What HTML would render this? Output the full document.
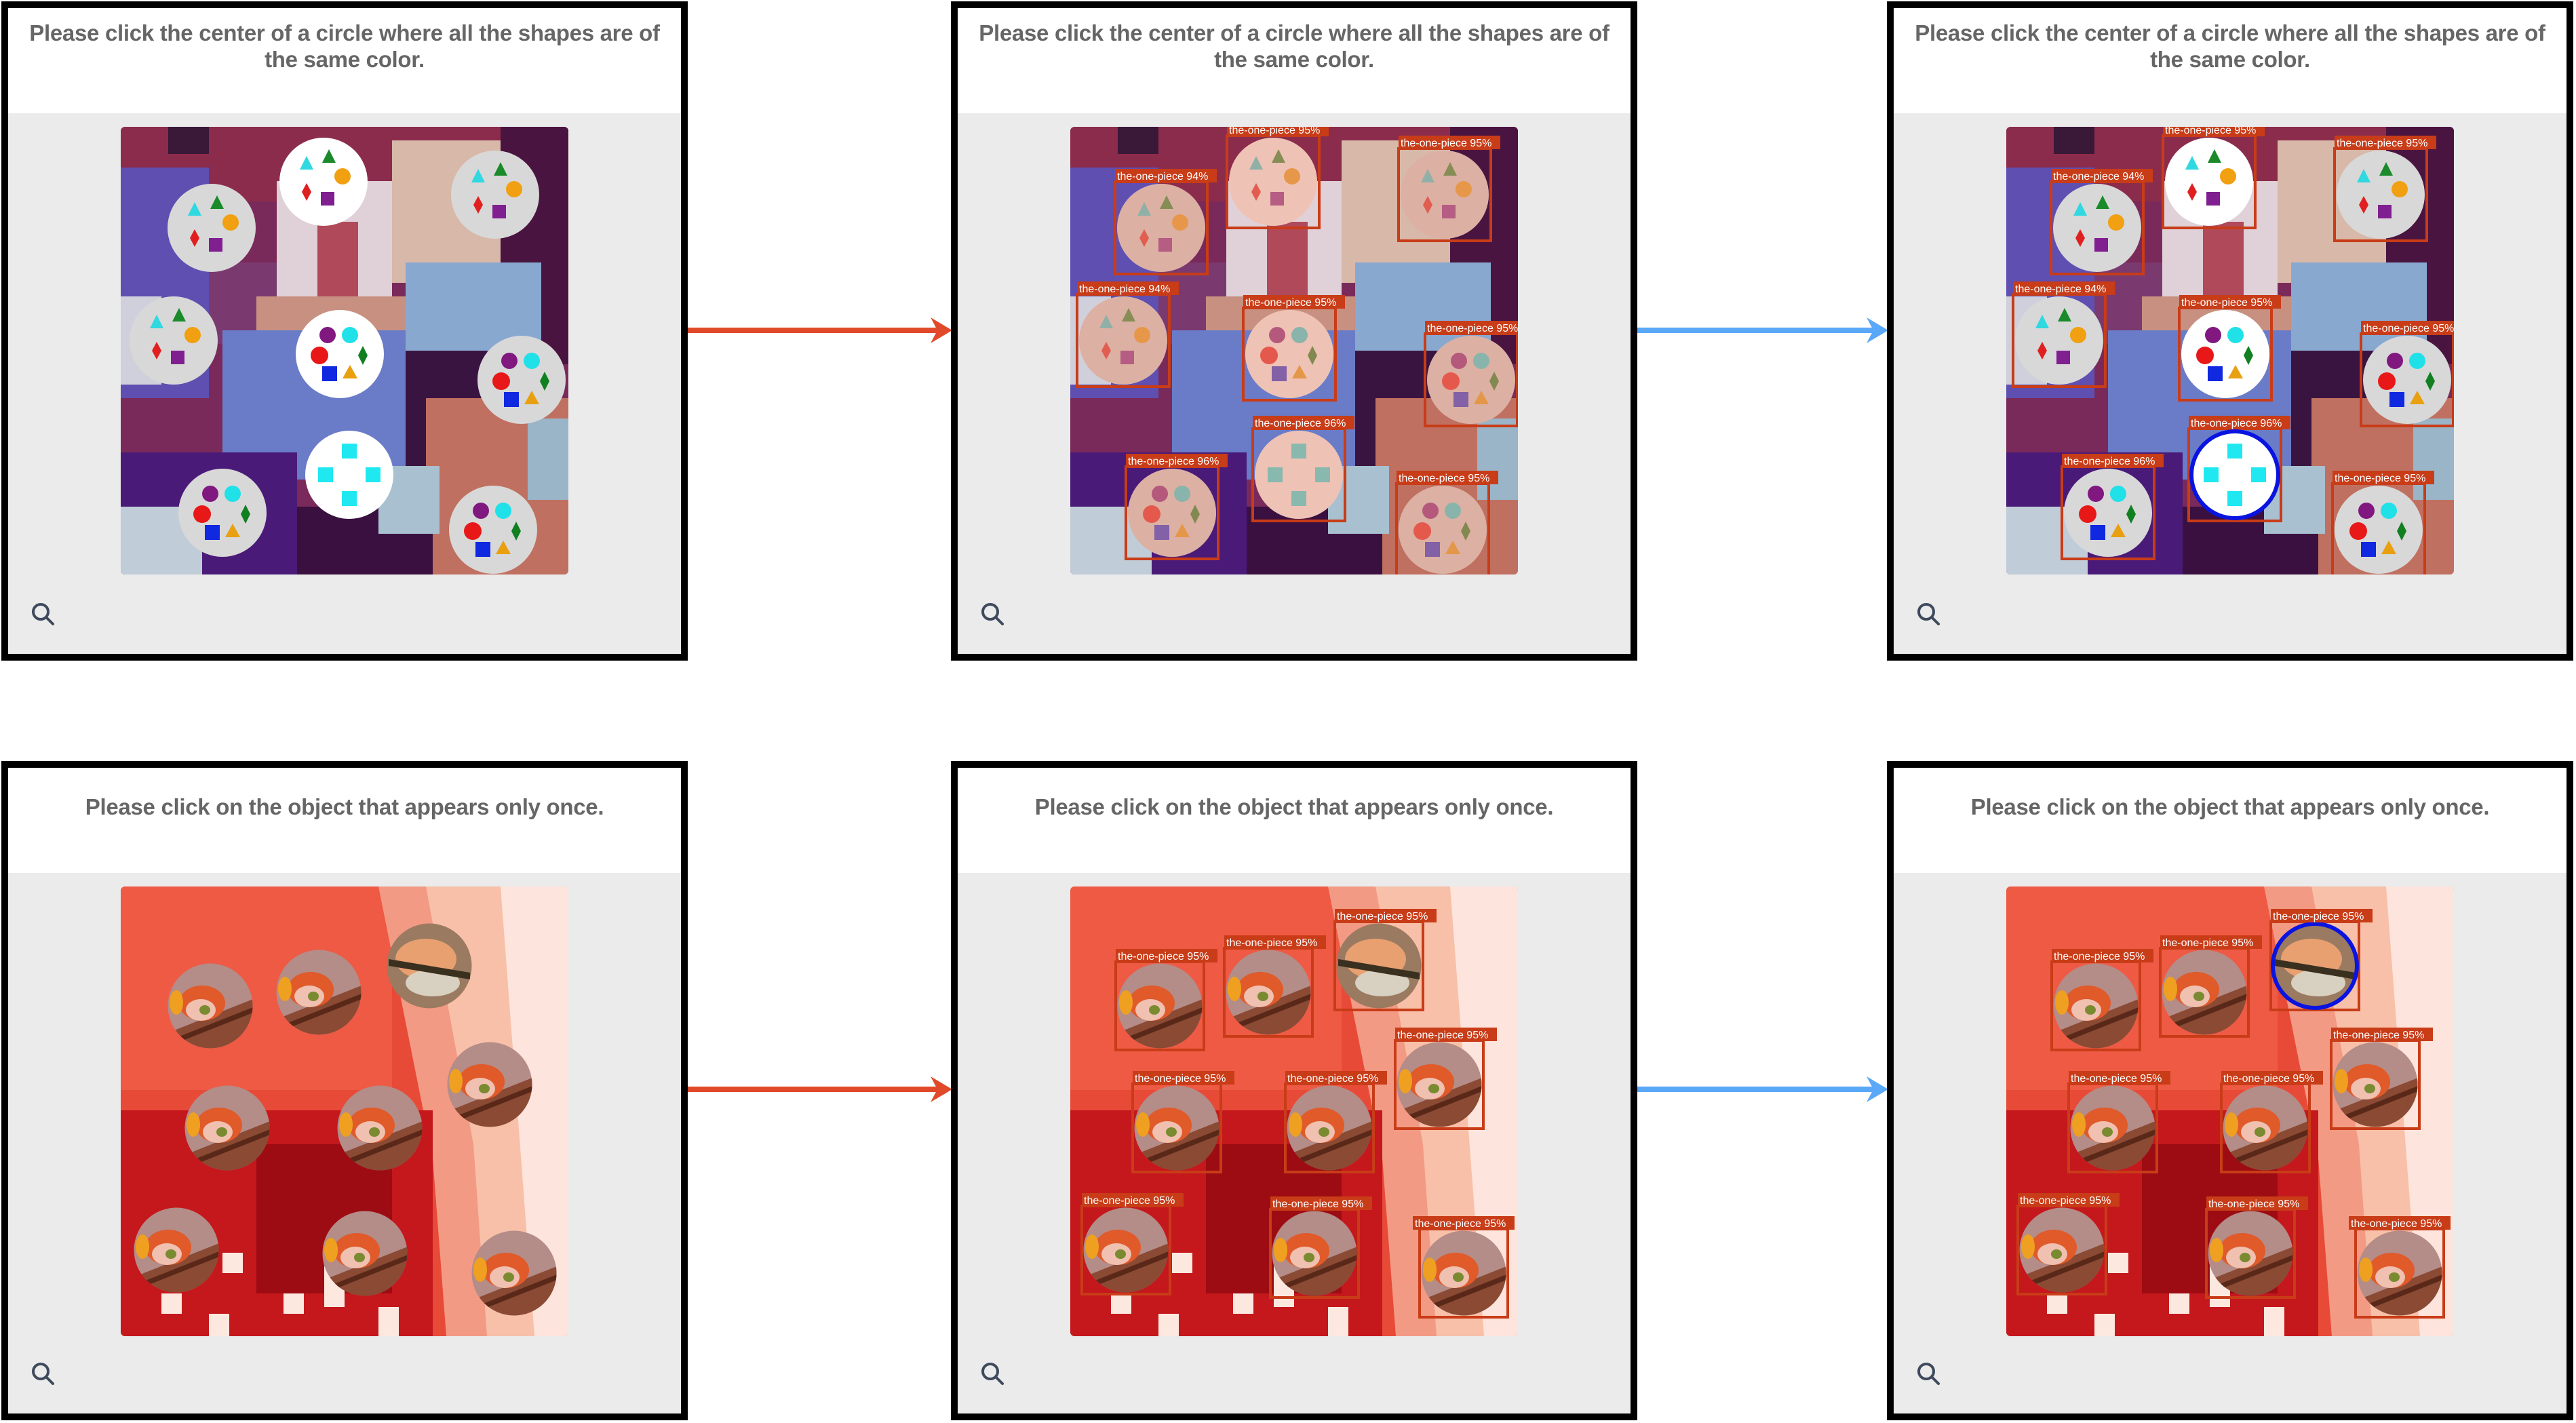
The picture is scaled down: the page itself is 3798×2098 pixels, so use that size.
<!DOCTYPE html>
<html><head><meta charset="utf-8"><style>
*{margin:0;padding:0;box-sizing:border-box}
body{width:3798px;height:2098px;background:#fff;position:relative;overflow:hidden;font-family:"Liberation Sans",sans-serif}
.p{position:absolute;width:1012px;height:972px;border:10px solid #000;background:#ebebeb}
.h{position:absolute;left:0;top:0;right:0;height:155px;background:#fff;color:#666;font-weight:bold;font-size:33px;text-align:center;line-height:39px;padding-top:17px;white-space:nowrap;letter-spacing:-0.3px}
.h1{padding-top:38px}
.im{position:absolute;left:166px;top:175px;border-radius:6px}
.s{position:absolute;left:32px;top:874px}
</style></head><body>
<svg width="0" height="0" style="position:absolute"><defs>
<clipPath id="cr"><rect width="660" height="660" rx="6"/></clipPath>
<clipPath id="cr2"><rect width="660" height="663" rx="6"/></clipPath>
<clipPath id="sc"><circle r="62.5"/></clipPath>
<g id="bg1">
<rect width="660" height="660" fill="#7a2a5a"/>
<rect width="660" height="110" fill="#8c2c4c"/>
<rect x="70" y="0" width="60" height="40" fill="#3a1838"/>
<rect x="0" y="60" width="130" height="340" fill="#5f4fb0"/>
<rect x="0" y="250" width="60" height="130" fill="#d0d0dc"/>
<rect x="230" y="80" width="170" height="170" fill="#e0d0d8"/>
<rect x="290" y="140" width="60" height="120" fill="#b04a5a"/>
<rect x="400" y="20" width="160" height="210" fill="#d8b8a8"/>
<rect x="560" y="0" width="100" height="350" fill="#4a1440"/>
<rect x="130" y="200" width="100" height="120" fill="#7a3a70"/>
<rect x="200" y="250" width="230" height="80" fill="#c89080"/>
<rect x="420" y="200" width="200" height="130" fill="#88a8d0"/>
<rect x="150" y="300" width="270" height="220" fill="#6a7cc8"/>
<rect x="420" y="330" width="120" height="200" fill="#3a1440"/>
<rect x="450" y="400" width="210" height="260" fill="#c07060"/>
<rect x="0" y="480" width="260" height="180" fill="#4a1a78"/>
<rect x="0" y="560" width="120" height="100" fill="#c0ccd8"/>
<rect x="260" y="560" width="200" height="100" fill="#3a1040"/>
<rect x="380" y="500" width="90" height="100" fill="#a8c0d0"/>
<rect x="600" y="430" width="60" height="120" fill="#9ab4c8"/>
</g>
<g id="bg2">
<rect width="660" height="663" fill="#e84a38"/>
<rect x="0" y="0" width="400" height="300" fill="#ee5a44"/>
<polygon points="380,0 660,0 660,663 480,663 460,400" fill="#f39a84"/>
<polygon points="450,0 660,0 660,663 540,663 520,380" fill="#f8c0a8"/>
<polygon points="560,0 660,0 660,663 610,663" fill="#fde4dc"/>
<rect x="0" y="330" width="460" height="333" fill="#c4181c"/>
<rect x="200" y="380" width="200" height="220" fill="#9c0c12"/>
<rect x="150" y="540" width="30" height="30" fill="#fde8e0"/><rect x="240" y="600" width="30" height="30" fill="#fde8e0"/><rect x="300" y="560" width="30" height="60" fill="#fde8e0"/><rect x="60" y="600" width="30" height="30" fill="#fde8e0"/><rect x="380" y="620" width="30" height="43" fill="#fde8e0"/><rect x="130" y="630" width="30" height="33" fill="#fde8e0"/>
</g>
<g id="A"><polygon points="-25,-38 -15,-18 -35,-18" fill="#30d8e0"/><polygon points="8,-48 18,-28 -2,-28" fill="#1a8a2a"/><circle cx="28" cy="-8" r="12" fill="#f0a010"/><polygon points="-25,2 -18,15 -25,28 -32,15" fill="#e02020"/><rect x="-4" y="15" width="20" height="20" fill="#802090"/></g>
<g id="B"><circle cx="-18" cy="-28" r="12" fill="#801880"/><circle cx="15" cy="-28" r="12" fill="#20e0e8"/><circle cx="-30" cy="2" r="13" fill="#e81818"/><polygon points="34,-12 41,2 34,16 27,2" fill="#108020"/><rect x="-26" y="18" width="22" height="22" fill="#1028e0"/><polygon points="15,16 26,36 4,36" fill="#e8a010"/></g>
<g id="C"><rect x="-11" y="-46" width="22" height="22" fill="#20e8f0"/><rect x="-46" y="-11" width="22" height="22" fill="#20e8f0"/><rect x="24" y="-11" width="22" height="22" fill="#20e8f0"/><rect x="-11" y="24" width="22" height="22" fill="#20e8f0"/></g>
<g id="W"><circle r="65" fill="#fff"/></g>
<g id="G"><circle r="65" fill="#d8d8d8"/></g>
<g id="T"><circle r="65" fill="#e09078" opacity=".55"/></g>
<g id="S"><g clip-path="url(#sc)"><rect x="-63" y="-63" width="126" height="126" fill="#b48c88"/><polygon points="-63,40 63,-10 63,63 -63,63" fill="#8a4a34"/><polygon points="-63,52 63,2 63,10 -63,60" fill="#5a2818"/><ellipse cx="-12" cy="-4" rx="34" ry="26" fill="#e05a2a"/><ellipse cx="-14" cy="6" rx="22" ry="16" fill="#f0c0b0"/><ellipse cx="-8" cy="6" rx="8" ry="7" fill="#7a8a30"/><ellipse cx="-50" cy="-5" rx="10" ry="18" fill="#f0a020"/></g></g>
</defs></svg>

<svg style="position:absolute;left:0;top:0" width="3798" height="2098">
<rect x="1012" y="483" width="376" height="8" fill="#e04a2a"/><polygon points="1404,487 1372,468 1382,487 1372,506" fill="#e04a2a"/>
<rect x="2412" y="483" width="356" height="8" fill="#5aa8f8"/><polygon points="2784,487 2752,468 2762,487 2752,506" fill="#5aa8f8"/>
<rect x="1012" y="1602" width="376" height="8" fill="#e04a2a"/><polygon points="1404,1606 1372,1587 1382,1606 1372,1625" fill="#e04a2a"/>
<rect x="2412" y="1602" width="356" height="8" fill="#5aa8f8"/><polygon points="2784,1606 2752,1587 2762,1606 2752,1625" fill="#5aa8f8"/>
</svg>

<!-- Row 1 -->
<div class="p" style="left:2px;top:2px"><div class="h">Please click the center of a circle where all the shapes are of<br>the same color.</div>
<svg class="im" width="660" height="660"><g clip-path="url(#cr)"><use href="#bg1"/>
<g transform="translate(299,81)"><use href="#W"/><use href="#A"/></g>
<g transform="translate(134,149)"><use href="#G"/><use href="#A"/></g>
<g transform="translate(552,100)"><use href="#G"/><use href="#A"/></g>
<g transform="translate(78,315)"><use href="#G"/><use href="#A"/></g>
<g transform="translate(323,335)"><use href="#W"/><use href="#B"/></g>
<g transform="translate(591,373)"><use href="#G"/><use href="#B"/></g>
<g transform="translate(337,513)"><use href="#W"/><use href="#C"/></g>
<g transform="translate(150,569)"><use href="#G"/><use href="#B"/></g>
<g transform="translate(549,594)"><use href="#G"/><use href="#B"/></g>
</g></svg>
<svg class="s" width="40" height="40"><circle cx="16" cy="16" r="11" fill="none" stroke="#3e4a5c" stroke-width="4"/><line x1="24" y1="24" x2="34" y2="34" stroke="#3e4a5c" stroke-width="4" stroke-linecap="round"/></svg></div>

<div class="p" style="left:1402px;top:2px"><div class="h">Please click the center of a circle where all the shapes are of<br>the same color.</div>
<svg class="im" width="660" height="660" font-family="Liberation Sans" font-size="16" fill="#fff"><g clip-path="url(#cr)"><use href="#bg1"/>
<g transform="translate(299,81)"><use href="#W"/><use href="#A"/><use href="#T"/></g>
<g transform="translate(134,149)"><use href="#G"/><use href="#A"/><use href="#T"/></g>
<g transform="translate(552,100)"><use href="#G"/><use href="#A"/><use href="#T"/></g>
<g transform="translate(78,315)"><use href="#G"/><use href="#A"/><use href="#T"/></g>
<g transform="translate(323,335)"><use href="#W"/><use href="#B"/><use href="#T"/></g>
<g transform="translate(591,373)"><use href="#G"/><use href="#B"/><use href="#T"/></g>
<g transform="translate(337,513)"><use href="#W"/><use href="#C"/><use href="#T"/></g>
<g transform="translate(150,569)"><use href="#G"/><use href="#B"/><use href="#T"/></g>
<g transform="translate(549,594)"><use href="#G"/><use href="#B"/><use href="#T"/></g>
</g>
<g fill="none" stroke="#c83c18" stroke-width="4">
<rect x="231" y="13" width="136" height="136"/><rect x="66" y="81" width="136" height="136"/><rect x="484" y="32" width="136" height="136"/><rect x="10" y="247" width="136" height="136"/><rect x="255" y="267" width="136" height="136"/><rect x="523" y="305" width="136" height="136"/><rect x="269" y="445" width="136" height="136"/><rect x="82" y="501" width="136" height="136"/><rect x="481" y="526" width="136" height="136"/></g>
<g fill="#c83c18"><rect x="231" y="-6" width="150" height="20"/><rect x="66" y="62" width="150" height="20"/><rect x="484" y="13" width="150" height="20"/><rect x="10" y="228" width="150" height="20"/><rect x="255" y="248" width="150" height="20"/><rect x="523" y="286" width="150" height="20"/><rect x="269" y="426" width="150" height="20"/><rect x="82" y="482" width="150" height="20"/><rect x="481" y="507" width="150" height="20"/></g>
<text x="234" y="10">the-one-piece 95%</text><text x="69" y="78">the-one-piece 94%</text><text x="487" y="29">the-one-piece 95%</text><text x="13" y="244">the-one-piece 94%</text><text x="258" y="264">the-one-piece 95%</text><text x="526" y="302">the-one-piece 95%</text><text x="272" y="442">the-one-piece 96%</text><text x="85" y="498">the-one-piece 96%</text><text x="484" y="523">the-one-piece 95%</text>
</svg>
<svg class="s" width="40" height="40"><circle cx="16" cy="16" r="11" fill="none" stroke="#3e4a5c" stroke-width="4"/><line x1="24" y1="24" x2="34" y2="34" stroke="#3e4a5c" stroke-width="4" stroke-linecap="round"/></svg></div>

<div class="p" style="left:2782px;top:2px"><div class="h">Please click the center of a circle where all the shapes are of<br>the same color.</div>
<svg class="im" width="660" height="660" font-family="Liberation Sans" font-size="16" fill="#fff"><g clip-path="url(#cr)"><use href="#bg1"/>
<g transform="translate(299,81)"><use href="#W"/><use href="#A"/></g>
<g transform="translate(134,149)"><use href="#G"/><use href="#A"/></g>
<g transform="translate(552,100)"><use href="#G"/><use href="#A"/></g>
<g transform="translate(78,315)"><use href="#G"/><use href="#A"/></g>
<g transform="translate(323,335)"><use href="#W"/><use href="#B"/></g>
<g transform="translate(591,373)"><use href="#G"/><use href="#B"/></g>
<g transform="translate(337,513)"><use href="#W"/><use href="#C"/></g>
<g transform="translate(150,569)"><use href="#G"/><use href="#B"/></g>
<g transform="translate(549,594)"><use href="#G"/><use href="#B"/></g>
</g>
<g fill="none" stroke="#c83c18" stroke-width="4">
<rect x="231" y="13" width="136" height="136"/><rect x="66" y="81" width="136" height="136"/><rect x="484" y="32" width="136" height="136"/><rect x="10" y="247" width="136" height="136"/><rect x="255" y="267" width="136" height="136"/><rect x="523" y="305" width="136" height="136"/><rect x="269" y="445" width="136" height="136"/><rect x="82" y="501" width="136" height="136"/><rect x="481" y="526" width="136" height="136"/></g>
<circle cx="337" cy="513" r="64" fill="none" stroke="#0a14e0" stroke-width="6"/>
<g fill="#c83c18"><rect x="231" y="-6" width="150" height="20"/><rect x="66" y="62" width="150" height="20"/><rect x="484" y="13" width="150" height="20"/><rect x="10" y="228" width="150" height="20"/><rect x="255" y="248" width="150" height="20"/><rect x="523" y="286" width="150" height="20"/><rect x="269" y="426" width="150" height="20"/><rect x="82" y="482" width="150" height="20"/><rect x="481" y="507" width="150" height="20"/></g>
<text x="234" y="10">the-one-piece 95%</text><text x="69" y="78">the-one-piece 94%</text><text x="487" y="29">the-one-piece 95%</text><text x="13" y="244">the-one-piece 94%</text><text x="258" y="264">the-one-piece 95%</text><text x="526" y="302">the-one-piece 95%</text><text x="272" y="442">the-one-piece 96%</text><text x="85" y="498">the-one-piece 96%</text><text x="484" y="523">the-one-piece 95%</text>
</svg>
<svg class="s" width="40" height="40"><circle cx="16" cy="16" r="11" fill="none" stroke="#3e4a5c" stroke-width="4"/><line x1="24" y1="24" x2="34" y2="34" stroke="#3e4a5c" stroke-width="4" stroke-linecap="round"/></svg></div>

<!-- Row 2 -->
<div class="p" style="left:2px;top:1122px"><div class="h h1">Please click on the object that appears only once.</div>
<svg class="im" width="660" height="663"><g clip-path="url(#cr2)"><use href="#bg2"/>
<use href="#S" x="132" y="176"/><use href="#S" x="292" y="156"/>
<g transform="translate(455,117)"><circle r="62.5" fill="#9a7a60"/><ellipse cx="-5" cy="-10" rx="45" ry="30" fill="#e8a070"/><ellipse cx="5" cy="25" rx="40" ry="20" fill="#d8d0c0"/><polygon points="-60,-10 60,10 60,20 -60,0" fill="#3a3020"/></g>
<use href="#S" x="544" y="292"/><use href="#S" x="157" y="356"/><use href="#S" x="382" y="356"/><use href="#S" x="82" y="536"/><use href="#S" x="360" y="541"/><use href="#S" x="580" y="570"/>
</g></svg>
<svg class="s" width="40" height="40"><circle cx="16" cy="16" r="11" fill="none" stroke="#3e4a5c" stroke-width="4"/><line x1="24" y1="24" x2="34" y2="34" stroke="#3e4a5c" stroke-width="4" stroke-linecap="round"/></svg></div>

<div class="p" style="left:1402px;top:1122px"><div class="h h1">Please click on the object that appears only once.</div>
<svg class="im" width="660" height="663" font-family="Liberation Sans" font-size="16" fill="#fff"><g clip-path="url(#cr2)"><use href="#bg2"/>
<use href="#S" x="132" y="176"/><use href="#S" x="292" y="156"/>
<g transform="translate(455,117)"><circle r="62.5" fill="#9a7a60"/><ellipse cx="-5" cy="-10" rx="45" ry="30" fill="#e8a070"/><ellipse cx="5" cy="25" rx="40" ry="20" fill="#d8d0c0"/><polygon points="-60,-10 60,10 60,20 -60,0" fill="#3a3020"/></g>
<use href="#S" x="544" y="292"/><use href="#S" x="157" y="356"/><use href="#S" x="382" y="356"/><use href="#S" x="82" y="536"/><use href="#S" x="360" y="541"/><use href="#S" x="580" y="570"/>
</g>
<g fill="none" stroke="#c83c18" stroke-width="4">
<rect x="67" y="111" width="130" height="130"/><rect x="227" y="91" width="130" height="130"/><rect x="390" y="52" width="130" height="130"/><rect x="479" y="227" width="130" height="130"/><rect x="92" y="291" width="130" height="130"/><rect x="317" y="291" width="130" height="130"/><rect x="17" y="471" width="130" height="130"/><rect x="295" y="476" width="130" height="130"/><rect x="515" y="505" width="130" height="130"/></g>
<g fill="#c83c18"><rect x="67" y="92" width="150" height="20"/><rect x="227" y="72" width="150" height="20"/><rect x="390" y="33" width="150" height="20"/><rect x="479" y="208" width="150" height="20"/><rect x="92" y="272" width="150" height="20"/><rect x="317" y="272" width="150" height="20"/><rect x="17" y="452" width="150" height="20"/><rect x="295" y="457" width="150" height="20"/><rect x="505" y="486" width="150" height="20"/></g>
<text x="70" y="108">the-one-piece 95%</text><text x="230" y="88">the-one-piece 95%</text><text x="393" y="49">the-one-piece 95%</text><text x="482" y="224">the-one-piece 95%</text><text x="95" y="288">the-one-piece 95%</text><text x="320" y="288">the-one-piece 95%</text><text x="20" y="468">the-one-piece 95%</text><text x="298" y="473">the-one-piece 95%</text><text x="508" y="502">the-one-piece 95%</text>
</svg>
<svg class="s" width="40" height="40"><circle cx="16" cy="16" r="11" fill="none" stroke="#3e4a5c" stroke-width="4"/><line x1="24" y1="24" x2="34" y2="34" stroke="#3e4a5c" stroke-width="4" stroke-linecap="round"/></svg></div>

<div class="p" style="left:2782px;top:1122px"><div class="h h1">Please click on the object that appears only once.</div>
<svg class="im" width="660" height="663" font-family="Liberation Sans" font-size="16" fill="#fff"><g clip-path="url(#cr2)"><use href="#bg2"/>
<use href="#S" x="132" y="176"/><use href="#S" x="292" y="156"/>
<g transform="translate(455,117)"><circle r="62.5" fill="#9a7a60"/><ellipse cx="-5" cy="-10" rx="45" ry="30" fill="#e8a070"/><ellipse cx="5" cy="25" rx="40" ry="20" fill="#d8d0c0"/><polygon points="-60,-10 60,10 60,20 -60,0" fill="#3a3020"/></g>
<use href="#S" x="544" y="292"/><use href="#S" x="157" y="356"/><use href="#S" x="382" y="356"/><use href="#S" x="82" y="536"/><use href="#S" x="360" y="541"/><use href="#S" x="580" y="570"/>
</g>
<g fill="none" stroke="#c83c18" stroke-width="4">
<rect x="67" y="111" width="130" height="130"/><rect x="227" y="91" width="130" height="130"/><rect x="390" y="52" width="130" height="130"/><rect x="479" y="227" width="130" height="130"/><rect x="92" y="291" width="130" height="130"/><rect x="317" y="291" width="130" height="130"/><rect x="17" y="471" width="130" height="130"/><rect x="295" y="476" width="130" height="130"/><rect x="515" y="505" width="130" height="130"/></g>
<circle cx="455" cy="117" r="62" fill="none" stroke="#0a14e0" stroke-width="6"/>
<g fill="#c83c18"><rect x="67" y="92" width="150" height="20"/><rect x="227" y="72" width="150" height="20"/><rect x="390" y="33" width="150" height="20"/><rect x="479" y="208" width="150" height="20"/><rect x="92" y="272" width="150" height="20"/><rect x="317" y="272" width="150" height="20"/><rect x="17" y="452" width="150" height="20"/><rect x="295" y="457" width="150" height="20"/><rect x="505" y="486" width="150" height="20"/></g>
<text x="70" y="108">the-one-piece 95%</text><text x="230" y="88">the-one-piece 95%</text><text x="393" y="49">the-one-piece 95%</text><text x="482" y="224">the-one-piece 95%</text><text x="95" y="288">the-one-piece 95%</text><text x="320" y="288">the-one-piece 95%</text><text x="20" y="468">the-one-piece 95%</text><text x="298" y="473">the-one-piece 95%</text><text x="508" y="502">the-one-piece 95%</text>
</svg>
<svg class="s" width="40" height="40"><circle cx="16" cy="16" r="11" fill="none" stroke="#3e4a5c" stroke-width="4"/><line x1="24" y1="24" x2="34" y2="34" stroke="#3e4a5c" stroke-width="4" stroke-linecap="round"/></svg></div>
</body></html>
